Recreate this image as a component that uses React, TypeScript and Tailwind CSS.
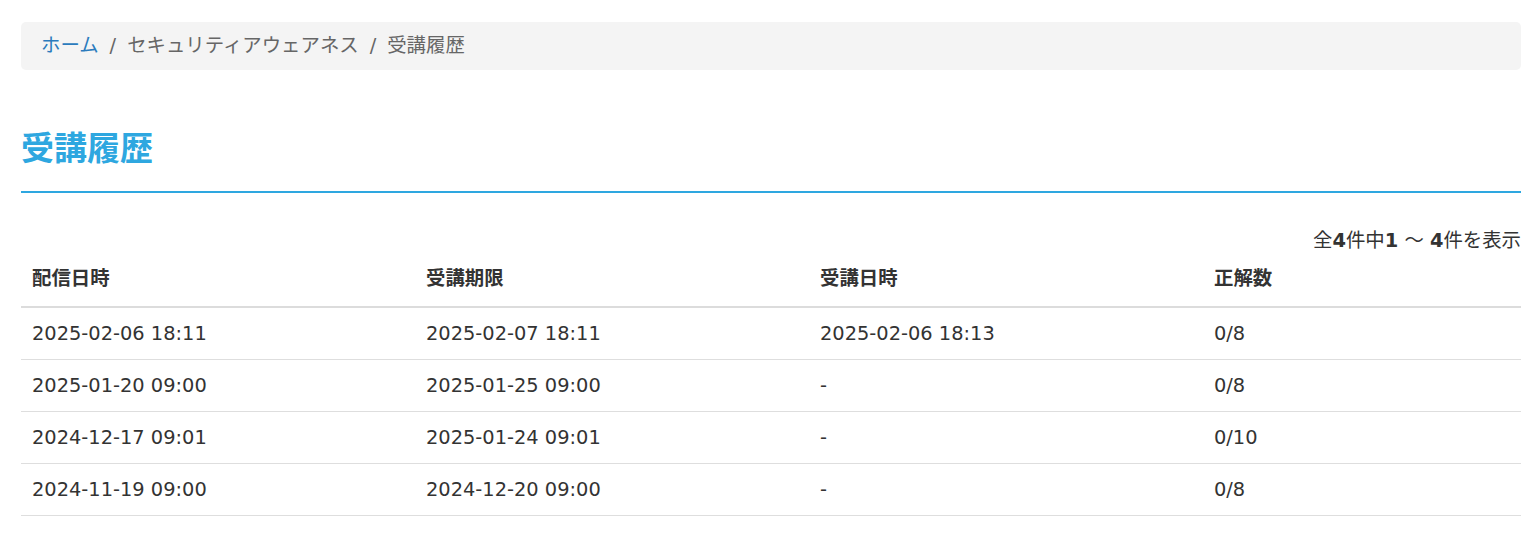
const rows = [
  { sent: '2025-02-06 18:11', due: '2025-02-07 18:11', taken: '2025-02-06 18:13', score: '0/8' },
  { sent: '2025-01-20 09:00', due: '2025-01-25 09:00', taken: '-', score: '0/8' },
  { sent: '2024-12-17 09:01', due: '2025-01-24 09:01', taken: '-', score: '0/10' },
  { sent: '2024-11-19 09:00', due: '2024-12-20 09:00', taken: '-', score: '0/8' },
];

const cols = 'grid grid-cols-[394px_394px_394px_1fr]';

export default function App() {
  return (
    <div
      className="min-h-[539px] bg-white pl-[21px] pr-[18px] pt-[22px] text-[#333] text-[19.4px]"
      style={{ fontFamily: '"DejaVu Sans", "Noto Sans CJK JP", sans-serif' }}
    >
      <nav className="flex items-center h-[48px] rounded-[5px] bg-[#f4f4f4] px-[20px] text-[#666]">
        <a href="#" className="text-[#2b7bbd]">ホーム</a>
        <span className="px-[11px]">/</span>
        <span>セキュリティアウェアネス</span>
        <span className="px-[11px]">/</span>
        <span>受講履歴</span>
      </nav>

      <h1 className="mt-[59px] pb-[22px] border-b-2 border-[#2ea7e0] text-[33px] leading-[40px] font-bold text-[#2ea7e0]">
        受講履歴
      </h1>

      <p className="mt-[36px] text-right leading-[24px]">
        全<b>4</b>件中<b>1</b> ～ <b>4</b>件を表示
      </p>

      <div className="mt-[3px]">
        <div className={`${cols} h-[52px] items-center pb-[4px] border-b-2 border-[#dcdcdc] font-bold`}>
          <div className="pl-[11px]">配信日時</div>
          <div className="pl-[11px]">受講期限</div>
          <div className="pl-[11px]">受講日時</div>
          <div className="pl-[11px]">正解数</div>
        </div>
        {rows.map((r) => (
          <div key={r.sent} className={`${cols} h-[52px] items-center border-b border-[#dedede]`}>
            <div className="pl-[11px]">{r.sent}</div>
            <div className="pl-[11px]">{r.due}</div>
            <div className="pl-[11px]">{r.taken}</div>
            <div className="pl-[11px]">{r.score}</div>
          </div>
        ))}
      </div>
    </div>
  );
}
